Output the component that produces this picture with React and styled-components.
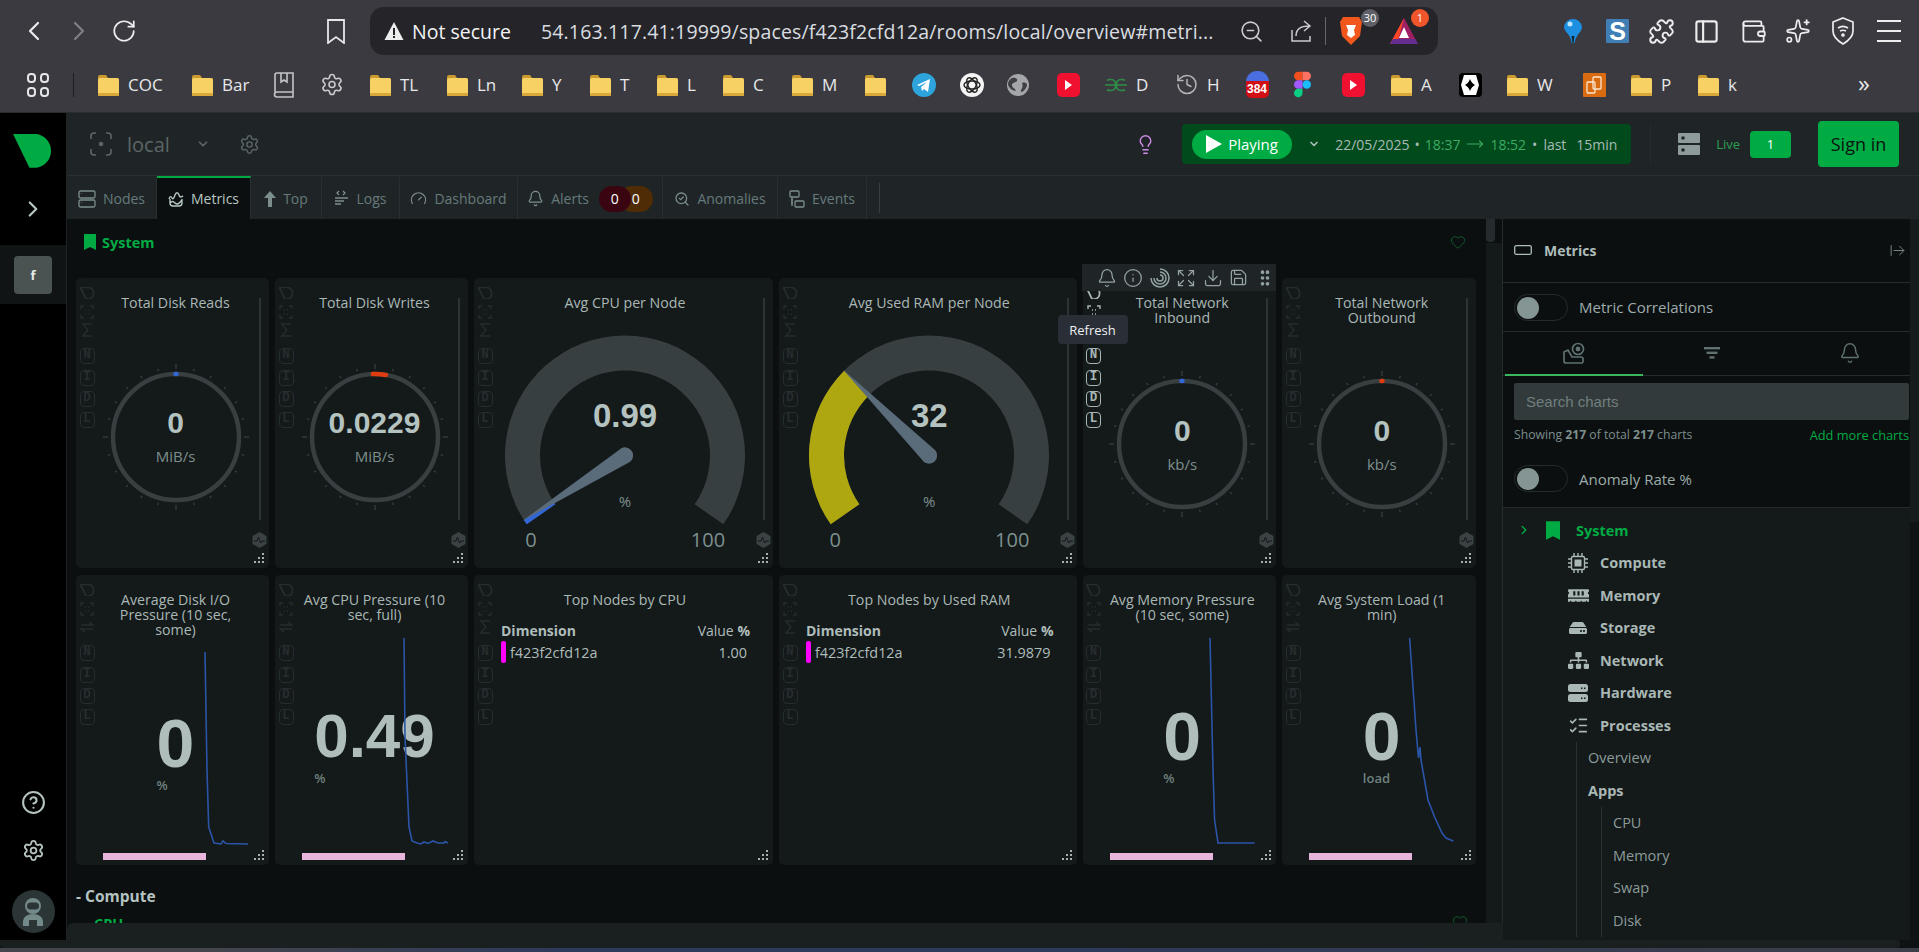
import React from "react";
import styled, { createGlobalStyle } from "styled-components";
import {
  ArrowRightFromLine,
  Bell,
  ChevronDown,
  ChevronLeft,
  ChevronRight,
  CircleHelp,
  Download,
  Expand,
  Gauge as GaugeIcon,
  GripVertical,
  Heart,
  History,
  Info,
  Lightbulb,
  ListChecks,
  MoveRight,
  PanelLeft,
  Puzzle,
  RotateCw,
  Save,
  SearchCheck,
  Settings,
  Sparkles,
  Wallet,
  ZoomOut,
} from "lucide-react";
import { FaHdd, FaMemory, FaSitemap } from "react-icons/fa";

const green = "#00ab44";
const font = `"Open Sans", "Liberation Sans", sans-serif`;

const Global = createGlobalStyle`
  html, body {
    margin: 0;
    height: 100%;
    overflow: hidden;
    background: #0b0f10;
    font-family: ${font};
  }
  * { box-sizing: border-box; }
`;

const Page = styled.div`
  width: 1919px;
  height: 952px;
  display: flex;
  flex-direction: column;
  overflow: hidden;
`;

/* browser chrome */
const Chrome = styled.div`
  height: 113px;
  flex: none;
  background: #3a3a40;
  border-bottom: 1px solid #2b2c30;
  color: #ecedef;
`;
const Toolbar = styled.div`
  height: 57px;
  padding: 7px 0 0 11px;
  display: flex;
  align-items: flex-start;
`;
const Slot = styled.div`
  width: ${(p) => p.$w || 45}px;
  height: 48px;
  flex: none;
  display: flex;
  align-items: center;
  justify-content: center;
  color: ${(p) => p.$color || "#ecedef"};
`;
const UrlBar = styled.div`
  width: 1068px;
  height: 48px;
  margin-left: 12px;
  margin-right: 112px;
  flex: none;
  background: #252529;
  border-radius: 14px;
  display: flex;
  align-items: center;
  padding-left: 14px;
  font-size: 19.5px;
  white-space: nowrap;
`;
const NotSecure = styled.span`
  margin-left: 8px;
  width: 129px;
  color: #f3f4f5;
`;
const UrlText = styled.span`
  width: 674px;
  color: #d9dde0;
  letter-spacing: 0.15px;
`;
const UrlActions = styled.div`
  margin-left: 24px;
  display: flex;
  align-items: center;
  color: #c9cbce;
`;
const UrlDivider = styled.div`
  width: 1px;
  height: 28px;
  background: #66676c;
  margin: 0 13px 0 11px;
`;
const BadgeWrap = styled.div`
  position: relative;
  width: ${(p) => p.$w}px;
  height: 36px;
  display: flex;
  align-items: center;
`;
const CountBadge = styled.span`
  position: absolute;
  top: -4px;
  right: ${(p) => p.$right}px;
  min-width: 18px;
  height: 18px;
  border-radius: 9px;
  background: ${(p) => p.$bg};
  color: #fff;
  font-size: 11px;
  line-height: 18px;
  text-align: center;
`;
const BookmarkRow = styled.div`
  height: 55px;
  padding-left: 27px;
  display: flex;
  align-items: center;
  font-size: 17px;
`;
const AppsGrid = styled.div`
  width: 22px;
  height: 24px;
  flex: none;
  display: grid;
  grid-template-columns: 1fr 1fr;
  gap: 4px;
`;
const AppsCell = styled.span`
  border: 2px solid #e5e6e8;
  border-radius: 4px;
`;
const BarDivider = styled.div`
  width: 1px;
  height: 24px;
  background: #1e1f22;
  margin: 0 22px 0 24px;
  flex: none;
`;
const Mark = styled.div`
  width: ${(p) => p.$w}px;
  flex: none;
  display: flex;
  align-items: center;
  gap: 8px;
  color: #e7e8ea;
  line-height: 24px;
`;
const MarkIcon = styled.span`
  width: 24px;
  height: 26px;
  flex: none;
  display: flex;
  align-items: center;
  justify-content: center;
  color: #c9cacd;
`;
const MoreMarks = styled.div`
  color: #e7e8ea;
  font-size: 24px;
  line-height: 24px;
  margin-top: -4px;
`;
const Tile = styled.span`
  width: 23px;
  height: 24px;
  border-radius: ${(p) => p.$r || 4}px;
  background: ${(p) => p.$bg};
  display: flex;
  align-items: center;
  justify-content: center;
  overflow: hidden;
`;
const SLetter = styled.span`
  color: #fff;
  font: 700 25px/24px "Liberation Sans", sans-serif;
`;
const CounterTile = styled.span`
  width: 23px;
  height: 27px;
  border-radius: 11px 11px 5px 5px;
  background: linear-gradient(#4a6ee0 0 38%, #d10f14 38%);
  color: #fff;
  font-size: 12px;
  font-weight: 700;
  text-align: center;
  line-height: 13px;
  padding-top: 12px;
  font-family: "Liberation Sans", sans-serif;
`;

/* app frame */
const AppBody = styled.div`
  flex: 1;
  display: flex;
  min-height: 0;
`;
const Rail = styled.aside`
  width: 67px;
  flex: none;
  background: #000;
  border-right: 1px solid #1d2223;
  display: flex;
  flex-direction: column;
  align-items: center;
  padding-top: 20px;
  color: #b5c3c0;
`;
const RailChevron = styled.div`
  height: 34px;
  margin-top: 24px;
  display: flex;
  align-items: center;
  color: #b9c6c3;
`;
const SpaceStrip = styled.div`
  width: 100%;
  height: 59px;
  margin-top: 19px;
  background: #101415;
  display: flex;
  align-items: center;
  justify-content: center;
`;
const SpaceTile = styled.div`
  width: 38px;
  height: 38px;
  border-radius: 4px;
  background: #4a5252;
  color: #e6ecea;
  font-size: 13px;
  font-weight: 700;
  display: flex;
  align-items: center;
  justify-content: center;
`;
const RailFoot = styled.div`
  margin-top: auto;
  padding-bottom: 7px;
  display: flex;
  flex-direction: column;
  align-items: center;
  gap: 24px;
`;
const Avatar = styled.div`
  width: 43px;
  height: 43px;
  border-radius: 50%;
  background: #2c3536;
  display: flex;
  align-items: center;
  justify-content: center;
  margin-top: 4px;
`;
const Main = styled.main`
  flex: 1;
  min-width: 0;
  display: flex;
  flex-direction: column;
`;
const TopBar = styled.header`
  height: 63px;
  flex: none;
  background: #1f2526;
  border-bottom: 1px solid #2b3132;
  display: flex;
  align-items: center;
  color: #5b6667;
`;
const SpaceName = styled.div`
  display: flex;
  align-items: center;
  padding-left: 23px;
  font-size: 20px;
`;
const SpaceLabel = styled.span`
  margin: 0 26px 0 15px;
  width: 43px;
`;
const TopRight = styled.div`
  margin-left: auto;
  display: flex;
  align-items: center;
  padding-right: 20px;
`;
const Player = styled.div`
  width: 449px;
  height: 40px;
  margin-left: 26px;
  margin-right: 19px;
  padding-left: 10px;
  background: #004a1c;
  border-radius: 4px;
  display: flex;
  align-items: center;
  color: #a9bab6;
  font-size: 14px;
  white-space: nowrap;
`;
const PlayPill = styled.div`
  width: 100px;
  height: 29px;
  border-radius: 15px;
  background: ${green};
  color: #fff;
  font-size: 15px;
  display: flex;
  align-items: center;
  gap: 6px;
  padding-left: 14px;
`;
const PlayCaret = styled.div`
  width: 43px;
  display: flex;
  justify-content: center;
  color: #a9bab6;
`;
const Stamp = styled.span`
  color: ${(p) => (p.$on ? "#3eaa62" : "inherit")};
  margin: 0 ${(p) => p.$gap ?? 0}px;
  display: inline-flex;
`;
const TopDivider = styled.div`
  width: 1px;
  height: 40px;
  background: #262c2d;
  margin-right: 27px;
`;
const LiveLabel = styled.span`
  color: #2f9e55;
  font-size: 13px;
  margin: 0 10px 0 16px;
`;
const LiveBadge = styled.div`
  width: 41px;
  height: 27px;
  border-radius: 4px;
  background: ${green};
  color: #fff;
  font-size: 13px;
  display: flex;
  align-items: center;
  justify-content: center;
`;
const SignIn = styled.button`
  width: 81px;
  height: 46px;
  margin-left: 27px;
  border: 0;
  border-radius: 4px;
  background: ${green};
  color: #0b1210;
  font: 18px ${font};
`;
const TabBar = styled.nav`
  height: 43px;
  flex: none;
  background: #1f2526;
  display: flex;
  align-items: stretch;
`;
const Tab = styled.div`
  width: ${(p) => p.$w}px;
  flex: none;
  display: flex;
  align-items: center;
  justify-content: center;
  gap: 7px;
  font-size: 14px;
  color: ${(p) => (p.$active ? "#b8c7c4" : "#667a7c")};
  background: ${(p) => (p.$active ? "#0b0f10" : "transparent")};
  border-top: 2px solid ${(p) => (p.$active ? green : "transparent")};
  border-right: 1px solid #2a3031;
  svg {
    color: ${(p) => (p.$active ? "#b8c7c4" : "#7c8d8d")};
  }
`;
const AlertBadges = styled.div`
  display: flex;
  margin-left: 3px;
`;
const AlertBadge = styled.span`
  width: ${(p) => p.$w}px;
  height: 26px;
  margin-left: ${(p) => p.$shift || 0}px;
  border-radius: 13px;
  background: ${(p) => p.$bg};
  color: #fff;
  font-size: 14px;
  display: flex;
  align-items: center;
  justify-content: center;
  z-index: ${(p) => p.$z};
`;
const TabRule = styled.div`
  width: 1px;
  height: 30px;
  margin: 7px 0 0 12px;
  background: #394041;
`;
const Workspace = styled.div`
  flex: 1;
  min-height: 0;
  display: flex;
`;
const ContentColumn = styled.div`
  flex: 1;
  min-width: 0;
  display: flex;
  flex-direction: column;
`;
const ContentRow = styled.div`
  flex: 1;
  min-height: 0;
  display: flex;
`;
const Content = styled.div`
  width: 1419px;
  padding-left: 9px;
  overflow: hidden;
  background: #0b0f10;
`;
const ScrollTrack = styled.div`
  flex: 1;
  border-right: 1px solid #262c2d;
  background: linear-gradient(#0b0f10 0 24px, #14191a 24px);
`;
const ScrollThumb = styled.div`
  width: 9px;
  height: 23px;
  border-radius: 0 0 4px 4px;
  background: #262c2d;
`;
const LowerBar = styled.div`
  height: 17px;
  flex: none;
  background: #1a1f20;
  border-radius: 6px 0 0 0;
`;
const SectionHead = styled.div`
  height: 24px;
  margin: 11px 0 24px;
  padding-left: 8px;
  padding-right: 20px;
  display: flex;
  align-items: center;
  gap: 6px;
  color: ${green};
  font-size: 14.5px;
  font-weight: 700;
`;
const HeartSlot = styled.span`
  margin-left: auto;
  color: #0f5a2c;
  display: flex;
`;
const Board = styled.div`
  display: grid;
  grid-template-columns: 193px 193px 299px 297.5px 193.5px 193.5px;
  grid-auto-rows: 290px;
  gap: 7px 6px;
`;
const Card = styled.section`
  position: relative;
  background: #14191a;
  border-radius: 5px;
  padding: 17px ${(p) => (p.$wide ? 15 : 12)}px 0 18px;
  display: flex;
  flex-direction: column;
  align-items: center;
  color: #aebdba;
`;
const Title = styled.h3`
  margin: 0;
  max-width: 152px;
  font-size: 14.2px;
  font-weight: 400;
  line-height: 15px;
  text-align: center;
  color: #a9b8b5;
  ${(p) => p.$free && "max-width: none;"}
`;
const ToolColumn = styled.div`
  position: absolute;
  top: 9px;
  left: 3px;
  width: 16px;
  display: flex;
  flex-direction: column;
  align-items: center;
  color: ${(p) => (p.$lit ? "#a7b6b4" : "#262d2e")};
`;
const ToolSlot = styled.div`
  height: 16px;
  margin-top: ${(p) => p.$mt}px;
  display: flex;
  align-items: center;
  justify-content: center;
`;
const LetterBox = styled.div`
  width: 15px;
  height: 16px;
  margin-top: ${(p) => p.$mt}px;
  border: 1.5px solid currentColor;
  border-radius: 4px;
  font: 700 12.5px/13px "Liberation Mono", monospace;
  text-align: center;
`;
const VolumeBar = styled.div`
  position: absolute;
  top: 20px;
  bottom: 48px;
  right: 8px;
  width: 2px;
  background: #2d3435;
`;
const HexMark = styled.svg`
  position: absolute;
  right: 2px;
  bottom: 20px;
`;
const ResizeMark = styled.svg`
  position: absolute;
  right: 3px;
  bottom: 3px;
`;
const PieStage = styled.div`
  flex: 1;
  padding-bottom: 5px;
  display: flex;
  align-items: center;
`;
const PieBox = styled.div`
  position: relative;
  width: 150px;
  height: 150px;
`;
const PieText = styled.div`
  position: absolute;
  inset: 0;
  display: flex;
  flex-direction: column;
  align-items: center;
  justify-content: center;
  gap: 6px;
  padding-top: 1px;
`;
const PieValue = styled.div`
  font: 700 30px/32px "Liberation Sans", sans-serif;
  color: #b5c3c0;
`;
const PieUnit = styled.div`
  font-size: 15px;
  line-height: 22px;
  color: #7d8f8d;
`;
const GaugeBox = styled.div`
  position: relative;
  width: 260px;
  height: 240px;
  margin-top: 12px;
`;
const GaugeLabel = styled.span`
  position: absolute;
  left: ${(p) => 130 + p.$x}px;
  top: ${(p) => p.$y}px;
  transform: translate(-50%, -50%);
  white-space: nowrap;
  font-size: ${(p) => p.$size}px;
  font-weight: ${(p) => p.$weight || 400};
  color: ${(p) => p.$color || "#7d908e"};
  font-family: ${(p) => (p.$weight ? `"Liberation Sans", sans-serif` : font)};
`;
const EasyStage = styled.div`
  flex: 1;
  display: flex;
  align-items: center;
`;
const EasyBlock = styled.div`
  display: flex;
  flex-direction: column;
  align-items: flex-start;
  position: relative;
  z-index: 0;
`;
const EasyValue = styled.div`
  font: 700 ${(p) => p.$size}px/68px "Liberation Sans", sans-serif;
  color: #afbebb;
`;
const EasyUnit = styled.div`
  font-size: 13px;
  line-height: 16px;
  font-weight: 600;
  color: #6f817f;
`;
const SparkSvg = styled.svg`
  position: absolute;
  inset: 0;
  z-index: 1;
  pointer-events: none;
`;
const PinkBar = styled.div`
  position: absolute;
  left: 27px;
  bottom: 5px;
  width: 103px;
  height: 7px;
  background: #e8b5dc;
`;
const DimTable = styled.div`
  width: 100%;
  margin-top: 14px;
  padding: 0 8px 0 9px;
  font-size: 14.4px;
`;
const DimHead = styled.div`
  display: flex;
  justify-content: space-between;
  line-height: 20px;
  font-size: 14px;
`;
const DimRow = styled.div`
  display: flex;
  align-items: center;
  height: 22px;
  padding-right: 3px;
`;
const DimSwatch = styled.span`
  width: 5px;
  height: 22px;
  border-radius: 2px;
  background: #f0f;
  margin-right: 4px;
`;
const DimValue = styled.span`
  margin-left: auto;
`;
const HoverBar = styled.div`
  position: absolute;
  left: -1px;
  top: -14px;
  width: 194px;
  height: 27px;
  z-index: 2;
  padding-left: 15px;
  background: #1f2526;
  display: flex;
  align-items: center;
  gap: 6.5px;
  color: #93a3a1;
`;
const Tooltip = styled.div`
  position: absolute;
  left: -25px;
  top: 37px;
  width: 70px;
  height: 29px;
  z-index: 3;
  border-radius: 4px;
  background: #2a2e36;
  color: #eef0f2;
  font-size: 13px;
  display: flex;
  align-items: center;
  justify-content: center;
`;
const SubHead = styled.div`
  margin: 21px 0 8px;
  color: #b5c3c0;
  font-size: 15.5px;
  font-weight: 700;
  line-height: 20px;
`;
const ClippedHead = styled.div`
  padding: 0 18px 0 18px;
  display: flex;
  color: ${green};
  font-size: 14.5px;
  font-weight: 700;
  line-height: 20px;
`;

/* right panel */
const Panel = styled.aside`
  width: 416px;
  flex: none;
  display: flex;
  background: #0b0f10;
  color: #9dacaa;
  overflow: hidden;
`;
const PanelBody = styled.div`
  width: 407px;
  flex: none;
  display: flex;
  flex-direction: column;
`;
const PanelScroll = styled.div`
  flex: 1;
  background: linear-gradient(#161b1c 0 303px, #0f1314 303px);
`;
const PanelHead = styled.div`
  height: 64px;
  flex: none;
  padding: 0 4px 1px 11px;
  border-bottom: 1px solid #262c2d;
  display: flex;
  align-items: center;
  font-size: 14px;
  font-weight: 700;
  color: #aebdba;
`;
const PanelTitle = styled.span`
  margin-left: 12px;
`;
const PanelClose = styled.span`
  margin-left: auto;
  display: flex;
  color: #7e8e8c;
`;
const ToggleRow = styled.div`
  height: ${(p) => p.$h}px;
  flex: none;
  padding: ${(p) => p.$pt || 0}px 0 0 11px;
  display: flex;
  align-items: center;
  gap: 11px;
  font-size: 15px;
  border-bottom: 1px solid #262c2d;
`;
const Toggle = styled.div`
  width: 54px;
  height: 27px;
  border: 1px solid #262c2d;
  border-radius: 14px;
  padding: 2px;
`;
const Knob = styled.div`
  width: 22px;
  height: 22px;
  border-radius: 50%;
  background: #859593;
`;
const PanelTabs = styled.div`
  height: 44px;
  flex: none;
  padding-left: 2px;
  border-bottom: 1px solid #262c2d;
  display: grid;
  grid-template-columns: repeat(3, 138px);
`;
const PanelTab = styled.div`
  display: flex;
  align-items: center;
  justify-content: center;
  color: #5f7170;
  margin-bottom: -1px;
  border-bottom: 2px solid ${(p) => (p.$active ? "#3cb55b" : "transparent")};
`;
const SearchBox = styled.div`
  height: 37px;
  flex: none;
  margin: 7px 1px 0 11px;
  padding-left: 12px;
  background: #333a3b;
  border-radius: 2px;
  display: flex;
  align-items: center;
  color: #6f7f7e;
  font: 15px "Liberation Sans", sans-serif;
`;
const Stats = styled.div`
  height: 16px;
  flex: none;
  margin: 7px 1px 0 11px;
  display: flex;
  justify-content: space-between;
  font-size: 12.2px;
  line-height: 16px;
  color: #7d8e8c;
`;
const AddMore = styled.span`
  color: ${green};
  font-size: 12.8px;
`;
const Tree = styled.div`
  flex: 1;
  min-height: 0;
  overflow: hidden;
  padding-top: 6px;
  background: #14191a;
`;
const TreeRow = styled.div`
  height: 32.5px;
  display: flex;
  align-items: center;
  white-space: nowrap;
  font-size: 14.5px;
  font-weight: ${(p) => (p.$bold ? 700 : 400)};
  color: ${(p) => p.$color || (p.$bold ? "#a9b8b5" : "#8c9c9a")};
  padding-left: ${(p) => p.$pl || 0}px;
  gap: ${(p) => p.$gap || 0}px;
`;
const TreeIcon = styled.span`
  width: ${(p) => p.$w || 22}px;
  display: flex;
  justify-content: center;
  flex: none;
`;
const TreeLabel = styled.span`
  margin-left: 1px;
`;
const TreeList = styled.div`
  margin-left: ${(p) => p.$ml}px;
  padding-left: ${(p) => p.$pl}px;
  border-left: 1px solid #2a3031;
`;
const BottomBar = styled.div`
  height: 8px;
  flex: none;
  display: flex;
  background: #0f1213;
`;
const BottomThumb = styled.div`
  width: 1900px;
  background: #1a1f20;
  border-radius: 0 5px 5px 5px;
`;
const WindowEdge = styled.div`
  height: 4px;
  flex: none;
  background: linear-gradient(90deg, #45464c 0 10%, #2c3a5c 30% 55%, #3c3e48 100%);
`;

/* drawings */
const polar = (r, deg) => {
  const a = ((deg - 90) * Math.PI) / 180;
  return [r * Math.cos(a), r * Math.sin(a)];
};
const sector = (r1, r2, a0, a1) => {
  const [x0, y0] = polar(r2, a0);
  const [x1, y1] = polar(r2, a1);
  const [x2, y2] = polar(r1, a1);
  const [x3, y3] = polar(r1, a0);
  const big = a1 - a0 > 180 ? 1 : 0;
  return `M${x0} ${y0}A${r2} ${r2} 0 ${big} 1 ${x1} ${y1}L${x2} ${y2}A${r1} ${r1} 0 ${big} 0 ${x3} ${y3}Z`;
};

const Logo = ({ size = 43, stroke }) => (
  <svg width={size} height={size * 0.82} viewBox="0 0 42 34.5">
    <path
      d="M1 1H24A16.7 16.7 0 0 1 24 34H17Z"
      fill={stroke ? "none" : green}
      stroke={stroke ? "currentColor" : "none"}
      strokeWidth={stroke ? 5 : 0}
    />
  </svg>
);

const Folder = () => (
  <svg width="23" height="25" viewBox="0 0 23 25">
    <path d="M1 5a2 2 0 0 1 2-2h6l2 3h9a2 2 0 0 1 2 2v14a2 2 0 0 1-2 2H3a2 2 0 0 1-2-2Z" fill="#c99a2e" />
    <rect x="1" y="6" width="21" height="18" rx="2" fill="#f7d163" />
    <rect x="1" y="21" width="21" height="3" rx="1" fill="#d9a83b" />
  </svg>
);

const YouTube = () => (
  <Tile $bg="#f0102f" $r={5}>
    <svg width="10" height="10" viewBox="0 0 10 10"><path d="M2 0l7 5-7 5Z" fill="#fff" /></svg>
  </Tile>
);

const marks = [
  { w: 94, label: "COC" },
  { w: 82, label: "Bar" },
  { w: 48, icon: "book" },
  { w: 48, icon: "gear" },
  { w: 77, label: "TL" },
  { w: 75, label: "Ln" },
  { w: 68, label: "Y" },
  { w: 67, label: "T" },
  { w: 66, label: "L" },
  { w: 69, label: "C" },
  { w: 73, label: "M" },
  { w: 49, label: "" },
  { w: 48, icon: "telegram" },
  { w: 46, icon: "gpt" },
  { w: 50, icon: "globe" },
  { w: 48, icon: "yt" },
  { w: 71, icon: "gfg", label: "D" },
  { w: 70, icon: "history", label: "H" },
  { w: 45, icon: "counter" },
  { w: 51, icon: "figma" },
  { w: 48, icon: "yt" },
  { w: 69, label: "A" },
  { w: 47, icon: "black" },
  { w: 77, label: "W" },
  { w: 47, icon: "orange" },
  { w: 67, label: "P" },
  { w: 162, label: "k" },
];

const markIcon = (name) => {
  switch (name) {
    case "book":
      return (
        <svg width="22" height="26" viewBox="0 0 22 26" fill="none" stroke="#c4c5c8" strokeWidth="1.6">
          <path d="M2 20V3a2 2 0 0 1 2-2h16v19H4a2 2 0 0 0 0 5h16v-5" />
          <path d="M8 1v9l3-2 3 2V1" />
        </svg>
      );
    case "gear":
      return <Settings size={25} strokeWidth={1.6} />;
    case "telegram":
      return (
        <svg width="24" height="26" viewBox="0 0 24 24">
          <circle cx="12" cy="12" r="12" fill="#2ea4dd" />
          <path d="M5 12l13-6-2 13-4-3-2 2-1-4 6-5-8 4Z" fill="#fff" />
        </svg>
      );
    case "gpt":
      return (
        <svg width="24" height="26" viewBox="0 0 24 24" fill="none">
          <circle cx="12" cy="12" r="12" fill="#f4f4f4" />
          <g stroke="#222" strokeWidth="1.4">
            <ellipse cx="12" cy="12" rx="8" ry="4" />
            <ellipse cx="12" cy="12" rx="8" ry="4" transform="rotate(60 12 12)" />
            <ellipse cx="12" cy="12" rx="8" ry="4" transform="rotate(120 12 12)" />
          </g>
        </svg>
      );
    case "globe":
      return (
        <svg width="22" height="24" viewBox="0 0 22 22">
          <circle cx="11" cy="11" r="11" fill="#a5a6a9" />
          <path d="M5 4c4-1 6 1 5 3s-5 1-5 4 3 3 4 6c-4 0-8-4-8-7s2-5 4-6ZM15 9c3-1 5 0 5 2s-3 7-6 7c-1-3 3-4 1-9Z" fill="#3f4045" />
        </svg>
      );
    case "yt":
      return <YouTube />;
    case "gfg":
      return (
        <svg width="24" height="14" viewBox="0 0 24 14" fill="none" stroke="#2f8d46" strokeWidth="1.6">
          <path d="M1 7h22M3 2.500C5 1 9 1 10.500 3c1.500 2 1.500 6 0 8S5 13 3 11.500M21 2.500C19 1 15 1 13.500 3c-1.500 2-1.500 6 0 8s5.500 2 7.500.5" />
        </svg>
      );
    case "history":
      return <History size={25} strokeWidth={1.5} color="#b3b4b7" />;
    case "counter":
      return <CounterTile>384</CounterTile>;
    case "figma":
      return (
        <svg width="17" height="27" viewBox="0 0 16 24">
          <path d="M0 4a4 4 0 0 1 4-4h4v8H4a4 4 0 0 1-4-4Z" fill="#f24e1e" />
          <path d="M8 0h4a4 4 0 0 1 0 8H8Z" fill="#ff7262" />
          <path d="M0 12a4 4 0 0 1 4-4h4v8H4a4 4 0 0 1-4-4Z" fill="#a259ff" />
          <circle cx="12" cy="12" r="4" fill="#1abcfe" />
          <path d="M0 20a4 4 0 0 1 4-4h4v4a4 4 0 0 1-8 0Z" fill="#0acf83" />
        </svg>
      );
    case "black":
      return (
        <Tile $bg="#000">
          <svg width="18" height="22" viewBox="0 0 18 22">
            <path d="M3 1h12l3 10-3 10H3L0 11Z" fill="#fff" />
            <path d="M9 5c1 3 3 5 5 6-2 1-4 3-5 6-1-3-3-5-5-6 2-1 4-3 5-6Z" fill="#000" />
          </svg>
        </Tile>
      );
    case "orange":
      return (
        <Tile $bg="#d96c10" $r={1}>
          <svg width="18" height="20" viewBox="0 0 18 20" fill="none" stroke="#fbe6cf" strokeWidth="1.3">
            <rect x="8" y="2" width="8" height="12" rx="1" />
            <rect x="2" y="7" width="8" height="11" rx="1" />
          </svg>
        </Tile>
      );
    default:
      return <Folder />;
  }
};

const Ring = ({ color, from, to }) => {
  const ticks = Array.from({ length: 24 }, (_, i) => i * 15);
  const [sx, sy] = polar(63, from);
  const [ex, ey] = polar(63, to);
  return (
    <svg width="150" height="150" viewBox="-75 -75 150 150">
      {ticks.map((deg) => {
        const [x1, y1] = polar(68, deg);
        const [x2, y2] = polar(deg % 90 === 0 ? 73 : 70.5, deg);
        return <line key={deg} x1={x1} y1={y1} x2={x2} y2={y2} stroke="#3a4243" strokeWidth="1.2" />;
      })}
      <circle r="63" fill="none" stroke="#373f40" strokeWidth="4.5" />
      <path d={`M${sx} ${sy}A63 63 0 0 1 ${ex} ${ey}`} fill="none" stroke={color} strokeWidth="4.5" strokeLinecap="round" />
    </svg>
  );
};

const PieCard = ({ title, value, unit, color, from = -0.5, to = 0.5, lit, children }) => (
  <Card>
    <Title>{title}</Title>
    <PieStage>
      <PieBox>
        <Ring color={color} from={from} to={to} />
        <PieText>
          <PieValue>{value}</PieValue>
          <PieUnit>{unit}</PieUnit>
        </PieText>
      </PieBox>
    </PieStage>
    <Tools third="sigma" lit={lit} />
    <VolumeBar />
    <Hex />
    <Resize />
    {children}
  </Card>
);

const GaugeCard = ({ title, value, angle, fill }) => {
  const [tx, ty] = polar(122, angle);
  const [bx, by] = polar(8, angle + 90);
  return (
    <Card $wide>
      <Title $free>{title}</Title>
      <GaugeBox>
        <svg width="260" height="240" viewBox="-130 -133.5 260 240">
          <path d={sector(85, 120, -125, 125)} fill="#373f40" />
          <path d={sector(85, 120, -125, angle)} fill={fill} />
          <path d={`M${tx} ${ty}L${bx} ${by}A8 8 0 0 1 ${-bx} ${-by}Z`} fill="#5a6b7a" />
          <path d={`M${bx} ${by}A8 8 0 1 1 ${-bx} ${-by}Z`} fill="#5a6b7a" />
        </svg>
        <GaugeLabel $x={0} $y={94} $size={33} $weight={700} $color="#b5c3c0">{value}</GaugeLabel>
        <GaugeLabel $x={0} $y={179} $size={15}>%</GaugeLabel>
        <GaugeLabel $x={-94} $y={217} $size={20}>0</GaugeLabel>
        <GaugeLabel $x={83} $y={217} $size={20}>100</GaugeLabel>
      </GaugeBox>
      <Tools third="sigma" />
      <VolumeBar />
      <Hex />
      <Resize />
    </Card>
  );
};

const sparkPath = (pts) => pts.map((p, i) => `${i ? "L" : "M"}${p[0]} ${p[1]}`).join("");

const EasyCard = ({ title, value, size = 68, unit, spark }) => (
  <Card>
    <Title>{title}</Title>
    <EasyStage>
      <EasyBlock>
        <EasyValue $size={size}>{value}</EasyValue>
        <EasyUnit>{unit}</EasyUnit>
      </EasyBlock>
    </EasyStage>
    <SparkSvg width="193" height="290" viewBox="0 0 193 290">
      <path d={sparkPath(spark)} fill="none" stroke="#2b55a8" strokeWidth="1.6" />
    </SparkSvg>
    <PinkBar />
    <Tools third="swap" />
    <Resize />
  </Card>
);

const TableCard = ({ title, value }) => (
  <Card $wide>
    <Title $free>{title}</Title>
    <DimTable>
      <DimHead>
        <strong>Dimension</strong>
        <span>Value <strong>%</strong></span>
      </DimHead>
      <DimRow>
        <DimSwatch />
        f423f2cfd12a
        <DimValue>{value}</DimValue>
      </DimRow>
    </DimTable>
    <Tools third="sigma" />
    <Resize />
  </Card>
);

const Tools = ({ third, lit }) => (
  <ToolColumn $lit={lit}>
    <Logo size={15} stroke />
    <ToolSlot $mt={5}>
      <svg width="14" height="14" viewBox="0 0 14 14" fill="none" stroke="currentColor" strokeWidth="1.4">
        <path d="M1 4V1h3M10 1h3v3M13 10v3h-3M4 13H1v-3M5 5h1M8 5h1M5 9h1M8 9h1" />
      </svg>
    </ToolSlot>
    <ToolSlot $mt={2}>
      {third === "sigma" ? (
        <svg width="12" height="14" viewBox="0 0 14 16" fill="none" stroke="currentColor" strokeWidth="1.6">
          <path d="M13 1H2l6 7-6 7h11" />
        </svg>
      ) : (
        <svg width="14" height="12" viewBox="0 0 14 12" fill="none" stroke="currentColor" strokeWidth="1.4">
          <path d="M1 4h12L9 1M13 8H1l4 3" />
        </svg>
      )}
    </ToolSlot>
    <LetterBox $mt={10}>N</LetterBox>
    <LetterBox $mt={6}>I</LetterBox>
    <LetterBox $mt={5}>D</LetterBox>
    <LetterBox $mt={5}>L</LetterBox>
  </ToolColumn>
);

const Hex = () => (
  <HexMark width="15" height="16" viewBox="0 0 15 16">
    <path d="M7.5 0l7 4v8l-7 4-7-4V4Z" fill="#3a4243" />
    <path d="M2 9h3l1.5-4 2 6 1.5-2h3" fill="none" stroke="#14191a" strokeWidth="1" />
  </HexMark>
);

const Resize = () => (
  <ResizeMark width="14" height="12" viewBox="0 0 14 12" fill="#a3b1af">
    <rect x="10" y="0" width="2" height="2" />
    <rect x="6" y="4" width="2" height="2" />
    <rect x="10" y="4" width="2" height="2" />
    <rect x="2" y="8" width="2" height="2" />
    <rect x="6" y="8" width="2" height="2" />
    <rect x="10" y="8" width="2" height="2" />
  </ResizeMark>
);

const NodesIcon = () => (
  <svg width="18" height="18" viewBox="0 0 18 18" fill="none" stroke="currentColor" strokeWidth="1.3">
    <rect x="1" y="1" width="16" height="7" rx="1.5" />
    <rect x="1" y="10" width="16" height="7" rx="1.5" />
    <path d="M3.5 3.500v.5M3.500 12.500v.5" />
  </svg>
);
const MetricsIcon = () => (
  <svg width="16" height="16" viewBox="0 0 16 16" fill="none" stroke="currentColor" strokeWidth="1.4">
    <path d="M1 8c1-3 2-3 3-1s2 0 3-3 3-3 4 0 2 2 4 1M2 8v4a3 3 0 0 0 3 3h6a3 3 0 0 0 3-3V8M2 12c2-2 3-2 5 0s4 1 7-3" />
  </svg>
);
const TopIcon = () => (
  <svg width="12" height="16" viewBox="0 0 12 16" fill="currentColor">
    <path d="M6 0l6 7H8v9H4V7H0Z" />
  </svg>
);
const LogsIcon = () => (
  <svg width="15" height="17" viewBox="0 0 15 17" fill="none" stroke="currentColor" strokeWidth="1.3">
    <path d="M5 1L3 3l2 2M9 1l2 2-2 2M1 8h13M1 11h9M1 14h6" />
  </svg>
);
const EventsIcon = () => (
  <svg width="16" height="18" viewBox="0 0 16 18" fill="none" stroke="currentColor" strokeWidth="1.3">
    <rect x="1" y="1" width="9" height="6" rx="1" />
    <rect x="6" y="11" width="9" height="6" rx="1" />
    <path d="M2 10h2M2 13h2M3 7v9" />
  </svg>
);
const ServerIcon = ({ w = 22, fill = "#8d9b9a", dot = "#1f2526" }) => (
  <svg width={w} height={w} viewBox="0 0 22 22">
    <rect x="0" y="0" width="22" height="10" rx="1" fill={fill} />
    <rect x="0" y="12" width="22" height="10" rx="1" fill={fill} />
    <circle cx="5" cy="5" r="1.800" fill={dot} />
    <circle cx="5" cy="17" r="1.800" fill={dot} />
  </svg>
);
const HardwareIcon = () => (
  <svg width="20" height="18" viewBox="0 0 20 18" fill="#a9b8b5">
    <rect width="20" height="8" rx="2.500" />
    <rect y="10" width="20" height="8" rx="2.500" />
    <path d="M13 3.500h1.500v1.500H13ZM16 3.500h1.500v1.500H16ZM13 13.500h1.500v1.500H13ZM16 13.500h1.500v1.500H16Z" fill="#14191a" />
  </svg>
);
const ChipIcon = () => (
  <svg width="20" height="20" viewBox="0 0 20 20" fill="none" stroke="#a9b8b5" strokeWidth="1.4">
    <rect x="3.500" y="3.500" width="13" height="13" rx="1.500" />
    <rect x="6.500" y="6.500" width="7" height="7" fill="#a9b8b5" stroke="none" />
    <path d="M6 0v3M10 0v3M14 0v3M6 17v3M10 17v3M14 17v3M0 6h3M0 10h3M0 14h3M17 6h3M17 10h3M17 14h3" />
  </svg>
);
const Spiral = () => (
  <svg width="20" height="20" viewBox="0 0 20 20" fill="none" stroke="currentColor" strokeWidth="1.5">
    <path d="M10 1a9 9 0 1 1-9 9M10 4a6 6 0 1 1-6 6M10 7a3 3 0 1 1-3 3" />
  </svg>
);
const ChartEye = () => (
  <svg width="22" height="22" viewBox="0 0 22 22" fill="none" stroke="currentColor" strokeWidth="1.7">
    <path d="M1 10v9a2 2 0 0 0 2 2h16a2 2 0 0 0 1-1v-3c0-1-1-2-2-2H9L5 8Z" />
    <circle cx="15" cy="7" r="5.500" />
    <circle cx="15" cy="7" r="1.600" fill="currentColor" />
  </svg>
);
const FilterBars = () => (
  <svg width="16" height="12" viewBox="0 0 16 12" fill="currentColor">
    <rect x="0" y="0" width="16" height="2.400" />
    <rect x="2.500" y="4.600" width="11" height="2.400" />
    <rect x="5.500" y="9.200" width="5" height="2.400" />
  </svg>
);
const GreenMark = ({ w = 12, h = 16 }) => (
  <svg width={w} height={h} viewBox="0 0 12 16" fill={green}>
    <path d="M0 0h12v16l-6-3-6 3Z" />
  </svg>
);
const ShareArrow = () => (
  <svg width="24" height="24" viewBox="0 0 24 24" fill="none" stroke="currentColor" strokeWidth="1.500">
    <path d="M2 11v11h18v-5M6 17c0-7 5-10 13-10M14 2l6 5-6 5" />
  </svg>
);
const BraveLion = () => (
  <svg width="24" height="30" viewBox="0 0 24 30">
    <path d="M4 1h16l3 5-2 14-9 9-9-9L1 6Z" fill="#f1571c" />
    <path d="M7 9h10l-2 5 1 5-4 3-4-3 1-5Z" fill="#fff" />
  </svg>
);
const BatTriangle = () => (
  <svg width="30" height="28" viewBox="0 0 30 28">
    <path d="M15 1L1 27h28Z" fill="#9e1f63" />
    <path d="M15 1L1 27h7Z" fill="#ff4724" />
    <path d="M1 27h28l-3-5H4Z" fill="#662d91" />
    <path d="M15 10l-5 11h10Z" fill="#fff" />
  </svg>
);
const PinIcon = () => (
  <svg width="18" height="24" viewBox="0 0 18 24">
    <path d="M9 0a9 9 0 0 1 9 8c0 5-6 7-7.500 16h-3C7 15 0 13 0 8a9 9 0 0 1 9-8Z" fill="#1c8fe0" />
    <path d="M7.500 17h3l-1 7h-1Z" fill="#0f2536" />
    <circle cx="6" cy="5" r="2.500" fill="#bfe6ff" />
  </svg>
);
const VpnShield = () => (
  <svg width="24" height="28" viewBox="0 0 24 28" fill="none" stroke="currentColor" strokeWidth="1.7">
    <path d="M12 1l10 4v9c0 6-5 10-10 13C7 24 2 20 2 14V5Z" />
    <path d="M7 11c3-2 7-2 10 0M9 14c2-1 4-1 6 0" />
    <circle cx="12" cy="18" r="1" fill="currentColor" />
  </svg>
);
const Hamburger = () => (
  <svg width="24" height="22" viewBox="0 0 24 22" fill="currentColor">
    <rect width="24" height="2" />
    <rect y="10" width="24" height="2" />
    <rect y="20" width="24" height="2" />
  </svg>
);
const Astronaut = () => (
  <svg width="24" height="28" viewBox="0 0 24 28">
    <circle cx="12" cy="8" r="8" fill="#74898a" />
    <rect x="6" y="4.500" width="12" height="7" rx="3.500" fill="#2c3536" />
    <path d="M2 28v-5a10 7 0 0 1 20 0v5Z" fill="#74898a" />
    <rect x="8" y="22" width="8" height="6" fill="#2c3536" />
  </svg>
);

const tabs = [
  { w: 90, name: "Nodes", icon: <NodesIcon /> },
  { w: 94, name: "Metrics", icon: <MetricsIcon />, active: true },
  { w: 71, name: "Top", icon: <TopIcon /> },
  { w: 78, name: "Logs", icon: <LogsIcon /> },
  { w: 118, name: "Dashboard", icon: <GaugeIcon size={17} strokeWidth={1.8} /> },
  { w: 145, name: "Alerts", icon: <Bell size={17} strokeWidth={1.7} />, alerts: true },
  { w: 115, name: "Anomalies", icon: <SearchCheck size={16} strokeWidth={1.9} /> },
  { w: 89, name: "Events", icon: <EventsIcon /> },
];

const spark1 = [[129, 77], [131, 195], [132.7, 252], [138, 268], [145, 269], [147, 266], [150, 268.5], [172, 269]];
const spark2 = [[129, 63], [130, 162], [134, 252], [137, 266], [142, 268], [146, 269], [149, 267], [153, 268.5], [158, 266], [163, 268], [169, 268], [170, 266.5], [173, 268]];
const spark5 = [[127, 63], [130, 195], [131.6, 245], [135, 268], [171.6, 268]];
const spark6 = [[127.6, 63], [134, 155], [136.5, 183], [138, 172], [139, 185], [142, 202], [146, 225], [153, 243], [160, 258], [164, 263], [171.4, 266]];

const sections = [
  { name: "Compute", icon: <ChipIcon /> },
  { name: "Memory", icon: <FaMemory size={21} /> },
  { name: "Storage", icon: <FaHdd size={18} /> },
  { name: "Network", icon: <FaSitemap size={21} /> },
  { name: "Hardware", icon: <HardwareIcon /> },
  { name: "Processes", icon: <ListChecks size={21} strokeWidth={1.8} /> },
];

const App = () => (
  <Page>
    <Global />
    <Chrome>
      <Toolbar>
        <Slot><ChevronLeft size={32} strokeWidth={1.6} /></Slot>
        <Slot $color="#7f8085"><ChevronRight size={32} strokeWidth={1.6} /></Slot>
        <Slot><RotateCw size={26} strokeWidth={1.6} /></Slot>
        <Slot $w={168} />
        <Slot $w={44}>
          <svg width="18" height="25" viewBox="0 0 18 25" fill="none" stroke="#e6e7e9" strokeWidth="1.8">
            <path d="M1 1h16v23l-8-6-8 6Z" />
          </svg>
        </Slot>
        <UrlBar>
          <svg width="20" height="20" viewBox="0 0 20 20">
            <path d="M10 1l9.500 18H.5Z" fill="#eceded" />
            <rect x="9" y="7" width="2" height="7" fill="#252529" />
            <rect x="9" y="15" width="2" height="2" fill="#252529" />
          </svg>
          <NotSecure>Not secure</NotSecure>
          <UrlText>54.163.117.41:19999/spaces/f423f2cfd12a/rooms/local/overview#metri...</UrlText>
          <UrlActions>
            <ZoomOut size={25} strokeWidth={1.5} style={{ marginRight: 26 }} />
            <ShareArrow />
            <UrlDivider />
            <BadgeWrap $w={50}>
              <BraveLion />
              <CountBadge $bg="#5f6067" $right={10}>30</CountBadge>
            </BadgeWrap>
            <BadgeWrap $w={40}>
              <BatTriangle />
              <CountBadge $bg="#f0552c" $right={0}>1</CountBadge>
            </BadgeWrap>
          </UrlActions>
        </UrlBar>
        <Slot><PinIcon /></Slot>
        <Slot><Tile $bg="#3f7fb5" $r={1}><SLetter>S</SLetter></Tile></Slot>
        <Slot $w={42}><Puzzle size={27} strokeWidth={1.7} /></Slot>
        <Slot $w={48}><PanelLeft size={27} strokeWidth={1.9} /></Slot>
        <Slot $w={46}><Wallet size={27} strokeWidth={1.6} /></Slot>
        <Slot $w={44}><Sparkles size={26} strokeWidth={1.6} /></Slot>
        <Slot $w={46}><VpnShield /></Slot>
        <Slot><Hamburger /></Slot>
      </Toolbar>
      <BookmarkRow>
        <AppsGrid>
          <AppsCell /><AppsCell /><AppsCell /><AppsCell />
        </AppsGrid>
        <BarDivider />
        {marks.map((m, i) => (
          <Mark key={i} $w={m.w}>
            <MarkIcon>{markIcon(m.icon)}</MarkIcon>
            {m.label}
          </Mark>
        ))}
        <MoreMarks>»</MoreMarks>
      </BookmarkRow>
    </Chrome>

    <AppBody>
      <Rail>
        <Logo />
        <RailChevron><ChevronRight size={26} strokeWidth={2} /></RailChevron>
        <SpaceStrip><SpaceTile>f</SpaceTile></SpaceStrip>
        <RailFoot>
          <CircleHelp size={25} strokeWidth={2} />
          <Settings size={23} strokeWidth={1.9} />
          <Avatar><Astronaut /></Avatar>
        </RailFoot>
      </Rail>
      <Main>
        <TopBar>
          <SpaceName>
            <svg width="22" height="24" viewBox="0 0 22 24" fill="none" stroke="currentColor" strokeWidth="1.6">
              <path d="M6 1H4a3 3 0 0 0-3 3v3M16 1h2a3 3 0 0 1 3 3v3M1 17v3a3 3 0 0 0 3 3h2M21 17v3a3 3 0 0 1-3 3h-2" />
              <circle cx="11" cy="12" r="1.500" fill="currentColor" />
            </svg>
            <SpaceLabel>local</SpaceLabel>
            <ChevronDown size={14} strokeWidth={3} style={{ marginRight: 29 }} />
            <Settings size={21} strokeWidth={1.6} />
          </SpaceName>
          <TopRight>
            <Lightbulb size={21} strokeWidth={1.6} color="#d08ae8" />
            <Player>
              <PlayPill>
                <svg width="16" height="18" viewBox="0 0 16 18"><path d="M0 0l16 9-16 9Z" fill="#fff" /></svg>
                Playing
              </PlayPill>
              <PlayCaret><ChevronDown size={12} strokeWidth={3.5} /></PlayCaret>
              <Stamp>22/05/2025</Stamp>
              <Stamp $gap={5}>•</Stamp>
              <Stamp $on>18:37</Stamp>
              <Stamp $on $gap={6}><MoveRight size={18} strokeWidth={1.5} /></Stamp>
              <Stamp $on>18:52</Stamp>
              <Stamp $gap={6}>•</Stamp>
              <Stamp>last</Stamp>
              <Stamp $gap={10}>15min</Stamp>
            </Player>
            <TopDivider />
            <ServerIcon />
            <LiveLabel>Live</LiveLabel>
            <LiveBadge>1</LiveBadge>
            <SignIn>Sign in</SignIn>
          </TopRight>
        </TopBar>
        <TabBar>
          {tabs.map((t) => (
            <Tab key={t.name} $w={t.w} $active={t.active}>
              {t.icon}
              {t.name}
              {t.alerts && (
                <AlertBadges>
                  <AlertBadge $w={32} $bg="#3a0410" $z={1}>0</AlertBadge>
                  <AlertBadge $w={34} $bg="#4f2c05" $shift={-12}>0</AlertBadge>
                </AlertBadges>
              )}
            </Tab>
          ))}
          <TabRule />
        </TabBar>
        <Workspace>
          <ContentColumn>
            <ContentRow>
              <Content>
                <SectionHead>
                  <GreenMark />
                  System
                  <HeartSlot><Heart size={16} strokeWidth={1.5} /></HeartSlot>
                </SectionHead>
                <Board>
                  <PieCard title="Total Disk Reads" value="0" unit="MiB/s" color="#3367d6" />
                  <PieCard title="Total Disk Writes" value="0.0229" unit="MiB/s" color="#e03c12" from={-2} to={10} />
                  <GaugeCard title="Avg CPU per Node" value="0.99" angle={-122.5} fill="#3367d6" />
                  <GaugeCard title="Avg Used RAM per Node" value="32" angle={-45} fill="#aea70f" />
                  <PieCard title="Total Network Inbound" value="0" unit="kb/s" color="#3367d6" lit>
                    <HoverBar>
                      <Bell size={20} strokeWidth={1.5} />
                      <Info size={20} strokeWidth={1.5} />
                      <Spiral />
                      <Expand size={20} strokeWidth={1.5} />
                      <Download size={20} strokeWidth={1.5} />
                      <Save size={19} strokeWidth={1.6} />
                      <GripVertical size={20} strokeWidth={2.4} />
                    </HoverBar>
                    <Tooltip>Refresh</Tooltip>
                  </PieCard>
                  <PieCard title="Total Network Outbound" value="0" unit="kb/s" color="#e03c12" />
                  <EasyCard title="Average Disk I/O Pressure (10 sec, some)" value="0" unit="%" spark={spark1} />
                  <EasyCard title="Avg CPU Pressure (10 sec, full)" value="0.49" size={62} unit="%" spark={spark2} />
                  <TableCard title="Top Nodes by CPU" value="1.00" />
                  <TableCard title="Top Nodes by Used RAM" value="31.9879" />
                  <EasyCard title="Avg Memory Pressure (10 sec, some)" value="0" unit="%" spark={spark5} />
                  <EasyCard title="Avg System Load (1 min)" value="0" unit="load" spark={spark6} />
                </Board>
                <SubHead>- Compute</SubHead>
                <ClippedHead>
                  CPU
                  <HeartSlot><Heart size={16} strokeWidth={1.5} /></HeartSlot>
                </ClippedHead>
              </Content>
              <ScrollTrack><ScrollThumb /></ScrollTrack>
            </ContentRow>
            <LowerBar />
          </ContentColumn>
          <Panel>
            <PanelBody>
              <PanelHead>
                <svg width="18" height="10" viewBox="0 0 18 10" fill="none" stroke="currentColor" strokeWidth="1.3">
                  <rect x=".7" y=".7" width="16.600" height="8.600" rx="1.500" />
                </svg>
                <PanelTitle>Metrics</PanelTitle>
                <PanelClose><ArrowRightFromLine size={17} strokeWidth={1.3} /></PanelClose>
              </PanelHead>
              <ToggleRow $h={49}>
                <Toggle><Knob /></Toggle>
                Metric Correlations
              </ToggleRow>
              <PanelTabs>
                <PanelTab $active><ChartEye /></PanelTab>
                <PanelTab><FilterBars /></PanelTab>
                <PanelTab><Bell size={22} strokeWidth={1.6} /></PanelTab>
              </PanelTabs>
              <SearchBox>Search charts</SearchBox>
              <Stats>
                <span>Showing <strong>217</strong> of total <strong>217</strong> charts</span>
                <AddMore>Add more charts</AddMore>
              </Stats>
              <ToggleRow $h={65} $pt={7}>
                <Toggle><Knob /></Toggle>
                Anomaly Rate %
              </ToggleRow>
              <Tree>
                <TreeRow $bold $color={green} $pl={14}>
                  <TreeIcon $w={14}><ChevronRight size={18} strokeWidth={2.4} color={green} /></TreeIcon>
                  <TreeIcon $w={44}><GreenMark w={14} h={19} /></TreeIcon>
                  <TreeLabel>System</TreeLabel>
                </TreeRow>
                {sections.map((s) => (
                  <TreeRow key={s.name} $bold $pl={64} $gap={11}>
                    <TreeIcon>{s.icon}</TreeIcon>
                    {s.name}
                  </TreeRow>
                ))}
                <TreeList $ml={73} $pl={11}>
                  <TreeRow>Overview</TreeRow>
                  <TreeRow $bold>Apps</TreeRow>
                  <TreeList $ml={13} $pl={11}>
                    <TreeRow>CPU</TreeRow>
                    <TreeRow>Memory</TreeRow>
                    <TreeRow>Swap</TreeRow>
                    <TreeRow>Disk</TreeRow>
                  </TreeList>
                </TreeList>
              </Tree>
            </PanelBody>
            <PanelScroll />
          </Panel>
        </Workspace>
      </Main>
    </AppBody>
    <BottomBar><BottomThumb /></BottomBar>
    <WindowEdge />
  </Page>
);

export default App;
